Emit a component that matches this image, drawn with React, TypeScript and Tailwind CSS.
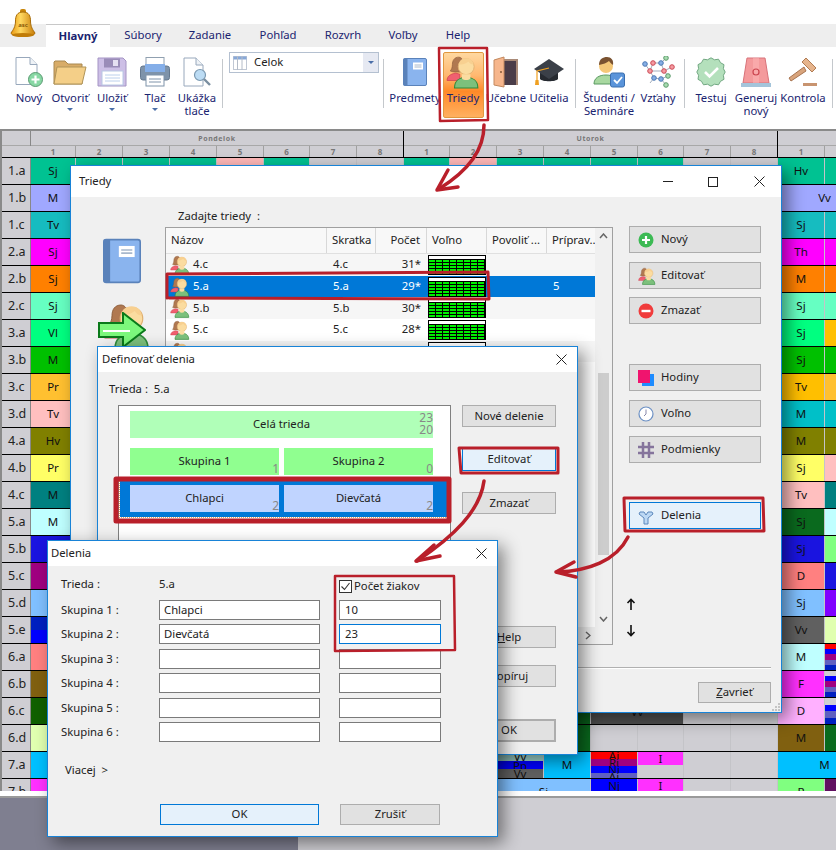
import React from 'react'

type Cell = { s?: number; c: string | string[]; t?: string; ts?: string[] }

const red = '#b91f2a'
const gray = 'bg-[#cfced3]'

const spans: Record<number, string> = {
    1: 'col-span-1', 2: 'col-span-2', 9: 'col-span-9', 10: 'col-span-10', 15: 'col-span-15',
}

const midGray: Cell[] = [{ s: 15, c: gray }]

const rows: { label: string; first: Cell; mid?: Cell[]; right: Cell[] }[] = [
    {
        label: '1.a', first: { c: 'bg-[#00c292]', t: 'Sj' },
        mid: [
            { c: 'bg-[#00c292]' }, { c: 'bg-[#00c292]' }, { c: 'bg-[#00c292]' }, { c: 'bg-[#ffb8b8]' },
            { c: 'bg-[#00c292]', t: 'Sj' }, { c: gray }, { c: gray }, { c: 'bg-[#00c292]' }, { c: 'bg-[#ffb8b8]' },
            { c: 'bg-[#00c292]' }, { c: 'bg-[#00c292]' }, { c: 'bg-[#00c292]' }, { c: 'bg-[#00c292]' }, { c: gray }, { c: gray },
        ],
        right: [{ c: 'bg-[#00c292]', t: 'Hv' }, { c: 'bg-[#00c292]' }],
    },
    { label: '1.b', first: { c: 'bg-[#a0a8ff]', t: 'M' }, right: [{ s: 2, c: 'bg-[#a0a8ff]', t: 'Vv' }] },
    { label: '1.c', first: { c: 'bg-[#16bcc0]', t: 'Tv' }, right: [{ c: 'bg-[#16bcc0]', t: 'Sj' }, { c: 'bg-[#16bcc0]' }] },
    { label: '2.a', first: { c: 'bg-[#ff00ff]', t: 'Sj' }, right: [{ c: 'bg-[#ff00ff]', t: 'Th' }, { c: 'bg-[#ff00ff]' }] },
    { label: '2.b', first: { c: 'bg-[#ff8000]', t: 'Sj' }, right: [{ c: 'bg-[#ff8000]', t: 'M' }, { c: 'bg-[#ff8000]' }] },
    { label: '2.c', first: { c: 'bg-[#66ffc2]', t: 'Sj' }, right: [{ c: 'bg-[#66ffc2]', t: 'Sj' }, { c: 'bg-[#66ffc2]' }] },
    { label: '3.a', first: { c: 'bg-[#00ff80]', t: 'Vl' }, right: [{ c: 'bg-[#00ff80]', t: 'Sj' }, { c: 'bg-[#ffbf00]' }] },
    { label: '3.b', first: { c: 'bg-[#00c000]', t: 'M' }, right: [{ c: 'bg-[#00c000]', t: 'Sj' }, { c: 'bg-[#00c000]' }] },
    { label: '3.c', first: { c: 'bg-[#ffc030]', t: 'Pr' }, right: [{ c: 'bg-[#ffbf00]', t: 'Tv' }, { c: 'bg-[#ffc030]' }] },
    { label: '3.d', first: { c: 'bg-[#ffbfbf]', t: 'Tv' }, right: [{ c: 'bg-[#00c0c8]', t: 'M' }, { c: 'bg-[#00c0c8]' }] },
    { label: '4.a', first: { c: 'bg-[#808000]', t: 'Hv' }, right: [{ c: 'bg-[#808000]', t: 'M' }, { c: 'bg-[#808000]' }] },
    { label: '4.b', first: { c: 'bg-[#ffff66]', t: 'Pr' }, right: [{ c: 'bg-[#ffff66]', t: 'Sj' }, { c: 'bg-[#ffbfbf]' }] },
    { label: '4.c', first: { c: 'bg-[#008080]', t: 'M' }, right: [{ c: 'bg-[#ffbfbf]', t: 'Tv' }, { c: 'bg-[#008080]' }] },
    { label: '5.a', first: { c: 'bg-[#bfffff]', t: 'M' }, right: [{ c: 'bg-[#0a6a1e]', t: 'Sj' }, { c: 'bg-[#bfffff]' }] },
    { label: '5.b', first: { c: 'bg-[#1a14e0]' }, right: [{ c: 'bg-[#1a14e0]', t: 'Sj' }, { c: 'bg-[#80ff80]' }] },
    { label: '5.c', first: { c: 'bg-[#a00080]' }, right: [{ c: 'bg-[#ff8080]', t: 'D' }, { c: 'bg-[#1a14e0]' }] },
    { label: '5.d', first: { c: 'bg-[#80c0ff]' }, right: [{ c: 'bg-[#80c0ff]', t: 'Sj' }, { c: 'bg-[#8000ff]' }] },
    { label: '5.e', first: { c: ['bg-[#0020c0]', 'bg-[#0000ff]'] }, right: [{ c: 'bg-[#606060]', t: 'Vv' }, { c: 'bg-[#e0ffb0]' }] },
    {
        label: '6.a', first: { c: 'bg-[#ff8080]' },
        right: [{ c: 'bg-[#bfffff]', t: 'M' }, { c: ['bg-[#ff0000]', 'bg-[#0000ff]', 'bg-[#a00080]', 'bg-[#6060c0]', 'bg-[#0020c0]'] }],
    },
    {
        label: '6.b', first: { c: 'bg-[#806010]' },
        right: [{ c: 'bg-[#ff30ff]', t: 'F' }, { c: ['bg-[#cfced3]', 'bg-[#0000ff]', 'bg-[#a00080]', 'bg-[#6060c0]', 'bg-[#0020c0]'] }],
    },
    {
        label: '6.c', first: { c: 'bg-[#106000]' },
        mid: [
            { s: 10, c: 'bg-[#500a50]' }, { c: 'bg-[#0a6a1e]', t: 'Sj' },
            { s: 2, c: ['bg-[#0000c0]', 'bg-[#505050]', 'bg-[#505050]', 'bg-[#505050]', 'bg-[#505050]', 'bg-[#505050]', 'bg-[#505050]'], t: 'Vv' }, { c: gray }, { c: gray },
        ],
        right: [{ c: 'bg-[#ffb0ff]', t: 'D' }, { c: ['bg-[#cfced3]', 'bg-[#0000ff]', 'bg-[#6060c0]', 'bg-[#0020c0]'] }],
    },
    {
        label: '6.d', first: { c: 'bg-[#e0ffb0]' },
        mid: [{ s: 10, c: 'bg-[#806010]' }, { c: 'bg-[#0a6a1e]', t: 'Sj' }, { c: gray }, { c: gray }, { c: gray }, { c: gray }],
        right: [{ c: 'bg-[#806010]', t: 'M' }, { c: 'bg-[#0a6a1e]' }],
    },
    {
        label: '7.a', first: { c: 'bg-[#00c0ff]' },
        mid: [
            { s: 9, c: gray }, { c: ['bg-[#a0d8d0]', 'bg-[#0000ff]', 'bg-[#606060]'], ts: ['Vv', 'Pp', 'Vv'] },
            { c: 'bg-[#00c0ff]', t: 'M' },
            { c: ['bg-[#ff0000]', 'bg-[#a00080]', 'bg-[#0000ff]', 'bg-[#6060c0]'], ts: ['Aj', 'Rj', 'Nj', 'Aj'] },
            { c: ['bg-[#ff30ff]', 'bg-[#cfced3]'], ts: ['I', ''] }, { c: gray }, { c: gray },
        ],
        right: [{ s: 2, c: 'bg-[#00c0ff]', t: 'M' }],
    },
    {
        label: '7.b', first: { c: 'bg-[#ff30ff]' },
        mid: [
            { s: 9, c: gray }, { s: 2, c: 'bg-[#80c0ff]', t: 'Sj' },
            { c: ['bg-[#0000ff]', 'bg-[#a00080]'], ts: ['Nj', 'Rj'] },
            { c: ['bg-[#ff30ff]', 'bg-[#cfced3]'], ts: ['I', ''] }, { c: gray }, { c: gray },
        ],
        right: [{ c: 'bg-[#80ff80]', t: 'R' }, { c: 'bg-[#601060]' }],
    },
]

const TimeCell = ({ cell }: { cell: Cell }) => {
    const span = spans[cell.s ?? 1]
    if (Array.isArray(cell.c)) {
        return (
            <div className={`${span} relative flex flex-col border-r border-[#c4c4c8] overflow-hidden`}>
                {cell.c.map((c, i) => (
                    <div key={i} className={`${c} flex-1 flex items-center justify-center text-[11.5px] leading-[7px] text-[#111]`}>
                        {cell.ts ? cell.ts[i] : ''}
                    </div>
                ))}
                {cell.t && <span className='absolute inset-0 pt-[5px] text-center text-[11.5px] text-[#111]'>{cell.t}</span>}
            </div>
        )
    }
    return (
        <div className={`${span} ${cell.c} flex items-center justify-center border-r border-[#c4c4c8] text-[11.5px] text-[#111]`}>
            {cell.t}
        </div>
    )
}

const TimeGrid = () => {
    const template = 'grid grid-cols-[29px_45px_47px_47px_47px_47px_46px_47px_47px_46px_47px_47px_47px_47px_46px_47px_47px_47px_47px]'
    return (
        <div className={`h-[662px] overflow-hidden border-t-2 border-[#8a8a8a] border-l-2 w-[900px] ${gray}`}>
            <div className={`${template} h-[15px] border-b border-[#a8a8a8]`}>
                <div className='row-span-2 border-r border-[#888]' />
                <div className='col-span-8 border-r border-black text-center text-[7px] leading-[15px] font-bold tracking-[0.6px] text-[#777]'>Pondelok</div>
                <div className='col-span-8 border-r border-black text-center text-[7px] leading-[15px] font-bold tracking-[0.6px] text-[#777]'>Utorok</div>
                <div className='col-span-2' />
            </div>
            <div className={`${template} h-[12px] border-b border-black`}>
                <div />
                {[1, 2, 3, 4, 5, 6, 7, 8, 1, 2, 3, 4, 5, 6, 7, 8, 1, 2].map((n, i) => (
                    <div key={i} className={`text-center text-[8px] leading-[11px] font-bold text-[#777] border-r ${i === 7 || i === 15 ? 'border-black' : 'border-[#a0a0a0]'}`}>{n}</div>
                ))}
            </div>
            {rows.map(r => (
                <div key={r.label} className={`${template} h-[27px] border-b border-black`}>
                    <div className='flex items-center pl-[6px] text-[12.5px] text-[#222] border-r border-[#888]'>{r.label}</div>
                    <TimeCell cell={r.first} />
                    {(r.mid ?? midGray).map((c, i) => <TimeCell key={i} cell={c} />)}
                    {r.right.map((c, i) => <TimeCell key={i} cell={c} />)}
                </div>
            ))}
        </div>
    )
}

/* ---- icons ---- */

const Bell = () => (
    <svg width='28' height='30' viewBox='0 0 28 30'>
        <defs>
            <linearGradient id='bellg' x1='0' x2='1' y1='0' y2='0'>
                <stop offset='0' stopColor='#e89810' />
                <stop offset='0.4' stopColor='#ffd860' />
                <stop offset='1' stopColor='#c87c08' />
            </linearGradient>
        </defs>
        <rect x='11' y='1' width='6' height='5' rx='2' fill='#c8860a' />
        <path d='M14 4c-6 0-7.5 4-7.5 9 0 6-2.500 9-4.500 12 0 2 5 3 12 3s12-1 12-3c-2-3-4.500-6-4.500-12 0-5-1.500-9-7.500-9z' fill='url(#bellg)' stroke='#a86c08' />
        <ellipse cx='14' cy='27' rx='11' ry='2' fill='#c07c08' />
        <text x='14' y='19' textAnchor='middle' fontSize='6' fontWeight='700' fill='#8a5a08'>asc</text>
    </svg>
)

const Person = ({ size }: { size: number }) => (
    <svg width={size} height={size} viewBox='0 0 32 32'>
        <path d='M12 2c-4 0-6 3-6 7 0 3-1 5-2 6 2 1 4 1 6 1h6V6c0-2-2-4-4-4z' fill='#b07850' stroke='#8a5a38' strokeWidth='.6' />
        <path d='M1 24c0-4 3-6 8-7l4 1v6z' fill='#f06070' stroke='#c83848' strokeWidth='.6' />
        <circle cx='19' cy='11' r='7.500' fill='#fbdca0' stroke='#e0b070' strokeWidth='.8' />
        <path d='M12 9c1-5 4-6 7-6s6 1 7 6c-3 0-4-2-5-3-2 2-6 3-9 3z' fill='#f8d090' />
        <path d='M8 31c0-7 5-10 11-10s11 3 11 10z' fill='#7cc07c' stroke='#2e8a3a' strokeWidth='1' />
        <path d='M15 18h8v4c-2 2-6 2-8 0z' fill='#fbdca0' />
    </svg>
)

const Book = ({ w, h }: { w: number; h: number }) => (
    <svg width={w} height={h} viewBox='0 0 24 28'>
        <rect x='.5' y='.5' width='23' height='27' rx='1.500' fill='#8ab4ee' stroke='#5a82ba' />
        <rect x='.5' y='.5' width='4' height='27' fill='#5a82ba' />
        <rect x='10' y='4.500' width='10' height='7' fill='#fff' />
        <path d='M11.500 7h7M11.500 9h7' stroke='#a8b8cc' />
    </svg>
)

const NewDoc = () => (
    <svg width='30' height='32' viewBox='0 0 30 32'>
        <path d='M2 1.500h14l7 7v20H2z' fill='#fff' stroke='#98a8bc' />
        <path d='M16 1.500v7h7' fill='#eef2f6' stroke='#98a8bc' />
        <circle cx='21.500' cy='23.500' r='7' fill='#88d8a4' stroke='#5a9a72' />
        <path d='M21.500 19.500v8M17.500 23.500h8' stroke='#fff' strokeWidth='2.200' />
    </svg>
)

const Folder = () => (
    <svg width='34' height='28' viewBox='0 0 34 28'>
        <path d='M1 4V26h28V6H15l-3-3H2z' fill='#d8ac68' stroke='#a88850' />
        <path d='M1 26l3-17h29l-4 17z' fill='#f4cf88' stroke='#b09458' />
    </svg>
)

const Floppy = () => (
    <svg width='30' height='30' viewBox='0 0 30 30'>
        <path d='M1 1h25l3 3v25H1z' fill='#cdbfe6' stroke='#a494c4' />
        <rect x='7' y='1.500' width='16' height='9' fill='#9a8cb8' />
        <rect x='16' y='3' width='5' height='6' fill='#e6e0f2' />
        <rect x='5' y='14' width='21' height='14' fill='#fff' stroke='#b8c8e4' />
        <path d='M8 18h15M8 21h15M8 24h15' stroke='#bcd0ec' />
    </svg>
)

const Printer = () => (
    <svg width='30' height='30' viewBox='0 0 30 30'>
        <rect x='6' y='.5' width='18' height='9' fill='#fff' stroke='#90a0b0' />
        <rect x='.5' y='9' width='29' height='14' rx='2.500' fill='#7e93aa' stroke='#64788e' />
        <rect x='5' y='7' width='20' height='8' fill='#84aee8' />
        <rect x='6' y='18' width='18' height='11' fill='#fff' stroke='#7e93aa' />
        <path d='M9 22h12M9 25h12' stroke='#7e93aa' />
    </svg>
)

const Preview = () => (
    <svg width='28' height='30' viewBox='0 0 28 30'>
        <path d='M1 1h12l7 7v21H1z' fill='#fff' stroke='#98a8bc' />
        <path d='M13 1v7h7' fill='#eef2f6' stroke='#98a8bc' />
        <circle cx='17' cy='18' r='5.500' fill='#bcdcf4' stroke='#7a98b0' strokeWidth='1.200' />
        <path d='M21 22l6 6' stroke='#7a8ea0' strokeWidth='2.400' />
    </svg>
)

const Door = () => (
    <svg width='26' height='32' viewBox='0 0 26 32'>
        <rect x='3' y='3' width='22' height='26' fill='#a98a78' />
        <rect x='10' y='5' width='13' height='24' fill='#4a3c48' />
        <path d='M1 4l10-3v30l-10-2z' fill='#f6b68c' stroke='#c48a60' />
        <circle cx='8' cy='16' r='.9' fill='#7a5030' />
    </svg>
)

const Cap = () => (
    <svg width='32' height='30' viewBox='0 0 32 30'>
        <path d='M7 13v9c2 3 16 3 18 0v-9z' fill='#262a30' />
        <path d='M16 2l15 10-15 10L1 12z' fill='#3b4048' />
        <path d='M16 11l-12 3v9' fill='none' stroke='#f0a020' strokeWidth='1.200' />
        <path d='M2.500 23h3l.5 5h-4z' fill='#f0a020' />
    </svg>
)

const Student = () => (
    <svg width='32' height='32' viewBox='0 0 32 32'>
        <circle cx='13' cy='10' r='7' fill='#f5c878' />
        <path d='M6 9c0-6 4-8 8-8s7 3 6 8c-2-1-3-3-4-4-2 2-6 3-10 4z' fill='#7a5230' />
        <path d='M1 28c0-6 5-9 12-9 4 0 7 1 9 3v6z' fill='#a8d8a0' stroke='#5a9a62' />
        <rect x='17.500' y='17' width='14' height='14' rx='2' fill='#5a94da' stroke='#3a6eae' />
        <path d='M21 24l3 3 5-6' fill='none' stroke='#fff' strokeWidth='1.800' />
    </svg>
)

const Molecule = () => {
    const blue = [[3, 8], [19, 7], [12, 22], [19, 23]]
    const redN = [[11, 7], [8, 15], [22, 15], [30, 11]]
    const green = [[24, 2], [26, 20], [24, 29]]
    return (
        <svg width='33' height='32' viewBox='0 0 33 32'>
            <path d='M3 8l5 7 3-8 8 0 5-5M19 7l3 8-8 0-6 0M8 15l4 7 7 1 7-3-4-5 8-4M19 23l5 6M12 22l-4 5' fill='none' stroke='#98a4b4' strokeWidth='.9' />
            {blue.map(([x, y], i) => <circle key={i} cx={x} cy={y} r='2.300' fill='#86aee4' stroke='#4a78b4' />)}
            {redN.map(([x, y], i) => <circle key={i} cx={x} cy={y} r='2.300' fill='#f49aa0' stroke='#cc4a56' />)}
            {green.map(([x, y], i) => <circle key={i} cx={x} cy={y} r='2.300' fill='#a8dcb0' stroke='#5c9a6c' />)}
        </svg>
    )
}

const Badge = () => (
    <svg width='30' height='30' viewBox='0 0 30 30'>
        <path d='M15 .8l3.500 2 4-.6 2 3.500 3.500 2-.6 4 1.800 3.300-1.800 3.300.6 4-3.500 2-2 3.500-4-.6-3.500 2-3.500-2-4 .6-2-3.500-3.500-2 .6-4L.8 15l1.800-3.300-.6-4 3.500-2 2-3.500 4 .6z' fill='#b4e0bc' stroke='#72a882' />
        <path d='M9 15l4.500 4.500L22 11' fill='none' stroke='#fff' strokeWidth='2.600' />
    </svg>
)

const Siren = () => (
    <svg width='32' height='32' viewBox='0 0 32 32'>
        <path d='M7 2h18l4 25H3z' fill='#f49a9c' stroke='#d8737a' />
        <path d='M13 2h6v25h-6z' fill='#fbb4b4' opacity='.6' />
        <circle cx='16' cy='16' r='3' fill='none' stroke='#cc4650' strokeWidth='1.200' />
        <rect x='1' y='27' width='30' height='4' fill='#a4c4da' />
    </svg>
)

const Gavel = () => (
    <svg width='32' height='32' viewBox='0 0 32 32'>
        <path d='M16 7l9 9M19 2l10 10-4 4-10-10z' fill='#e6b48c' stroke='#b07c54' />
        <path d='M17 11L2 22l2 3 15-10z' fill='#d8a47c' stroke='#a87450' />
        <rect x='16' y='27' width='14' height='3' fill='#c89470' />
    </svg>
)

const Caret = () => <div className='mt-[4px] w-0 h-0 border-x-[3px] border-x-transparent border-t-[3px] border-t-[#4a6ea8]' />

const Volno = () => (
    <svg width='58' height='20' viewBox='0 0 58 20' className='block'>
        <rect width='58' height='20' fill='#000' />
        <rect x='1' y='1' width='56' height='3' fill='#fff' />
        {[5, 8, 11, 14, 17].map(y =>
            [1, 8, 15, 22, 29, 36, 43, 50].map(x => <rect key={`${x}-${y}`} x={x} y={y} width='6' height='2' fill='#00f000' />)
        )}
    </svg>
)

const GridIcon = () => (
    <svg width='16' height='16' viewBox='0 0 16 16'>
        <path d='M5 0v16M11 0v16M0 5h16M0 11h16' stroke='#85749c' strokeWidth='2.500' />
    </svg>
)

const Clock = () => (
    <svg width='16' height='16' viewBox='0 0 16 16'>
        <circle cx='8' cy='8' r='7' fill='#fff' stroke='#6c90c4' strokeWidth='1.200' />
        <path d='M8 3.500V8l-2 2' fill='none' stroke='#88a' />
    </svg>
)

const Branch = () => (
    <svg width='16' height='18' viewBox='0 0 16 18'>
        <path d='M6 17h4v-6l5-4-1-2h-4L8 8 6 5H2L1 7l5 4z' fill='#bcd8f4' stroke='#5c88bc' />
    </svg>
)

const Plus = () => (
    <svg width='16' height='16' viewBox='0 0 16 16'>
        <circle cx='8' cy='8' r='7.500' fill='#3cba54' />
        <path d='M8 4v8M4 8h8' stroke='#fff' strokeWidth='2.200' />
    </svg>
)

const Minus = () => (
    <svg width='16' height='16' viewBox='0 0 16 16'>
        <circle cx='8' cy='8' r='7.500' fill='#f03c3c' />
        <path d='M3.500 8h9' stroke='#fff' strokeWidth='2.400' />
    </svg>
)

const Squares = () => (
    <div className='relative w-[16px] h-[16px]'>
        <div className='absolute right-0 bottom-0 w-[12px] h-[12px] bg-[#1e8cff]' />
        <div className='absolute left-0 top-0 w-[12px] h-[13px] bg-[#f0146e]' />
    </div>
)

const XMark = () => (
    <svg width='11' height='11' viewBox='0 0 11 11'>
        <path d='M.5.5l10 10M10.500.5l-10 10' stroke='#222' fill='none' />
    </svg>
)

/* ---- ribbon ---- */

const RibbonItem = ({ w, icon, label, caret }: { w: string; icon: React.ReactNode; label: string[]; caret?: boolean }) => (
    <div className={`${w} flex flex-col items-center pt-[8px] text-[11.3px] leading-[13px] text-[#1a2470]`}>
        <div className='h-[34px] flex items-center justify-center'>{icon}</div>
        <div className='mt-[2px] flex flex-col items-center whitespace-nowrap'>
            {label.map(l => <span key={l}>{l}</span>)}
        </div>
        {caret && <Caret />}
    </div>
)

const Sep = ({ ml }: { ml: string }) => <div className={`${ml} mt-[12px] h-[49px] w-px bg-[#c4c8cc]`} />

const Ribbon = () => (
    <div className='h-[82px] bg-white flex pl-[10px]'>
        <RibbonItem w='w-[38px]' icon={<NewDoc />} label={['Nový']} />
        <RibbonItem w='w-[44px]' icon={<Folder />} label={['Otvoriť']} caret />
        <RibbonItem w='w-[40px]' icon={<Floppy />} label={['Uložiť']} caret />
        <RibbonItem w='w-[46px]' icon={<Printer />} label={['Tlač']} caret />
        <RibbonItem w='w-[38px]' icon={<Preview />} label={['Ukážka', 'tlače']} />
        <Sep ml='ml-[6px]' />
        <div className='ml-[6px] mt-[5px] h-[21px] w-[150px] border border-[#b4c0d0] flex items-center'>
            <svg width='14' height='14' viewBox='0 0 14 14' className='ml-[3px]'>
                <rect x='.5' y='.5' width='13' height='13' fill='#fff' stroke='#c0c8d4' />
                <rect x='.5' y='.5' width='13' height='3' fill='#88a8d8' />
                <path d='M4.500 0v14M9 0v14' stroke='#b4bcc8' />
            </svg>
            <span className='ml-[7px] flex-1 text-[11.3px] text-[#222]'>Celok</span>
            <div className='h-full w-[15px] bg-[#e6e9f2] flex items-center justify-center'>
                <div className='w-0 h-0 border-x-[3px] border-x-transparent border-t-[3px] border-t-[#4a6ea8]' />
            </div>
        </div>
        <Sep ml='ml-[4px]' />
        <div className='ml-[8px]'><RibbonItem w='w-[46px]' icon={<Book w={24} h={28} />} label={['Predmety']} /></div>
        <div className='w-[50px] flex flex-col items-center text-[11.3px] leading-[13px] text-[#1a2470]'>
            <div className='mt-[5px] h-[66px] w-[41px] flex flex-col items-center rounded-[2px] border border-[#e09840] bg-[linear-gradient(180deg,#ffd8a0_0%,#ffb870_35%,#ff8a28_60%,#ffb060_100%)]'>
                <div className='mt-[2px] h-[34px] flex items-center'><Person size={34} /></div>
                <span className='mt-[2px]'>Triedy</span>
            </div>
        </div>
        <RibbonItem w='w-[36px]' icon={<Door />} label={['Učebne']} />
        <RibbonItem w='w-[50px]' icon={<Cap />} label={['Učitelia']} />
        <Sep ml='ml-[1px]' />
        <div className='ml-[2px]'><RibbonItem w='w-[62px]' icon={<Student />} label={['Študenti /', 'Semináre']} /></div>
        <RibbonItem w='w-[36px]' icon={<Molecule />} label={['Vzťahy']} />
        <Sep ml='ml-[8px]' />
        <div className='ml-[5px]'><RibbonItem w='w-[42px]' icon={<Badge />} label={['Testuj']} /></div>
        <RibbonItem w='w-[48px]' icon={<Siren />} label={['Generuj', 'nový']} />
        <RibbonItem w='w-[46px]' icon={<Gavel />} label={['Kontrola']} />
        <Sep ml='ml-[6px]' />
    </div>
)

const tabs: [string, string][] = [
    ['Súbory', 'w-[66px]'], ['Zadanie', 'w-[68px]'], ['Pohľad', 'w-[68px]'], ['Rozvrh', 'w-[62px]'], ['Voľby', 'w-[58px]'], ['Help', 'w-[52px]'],
]

const Tabs = () => (
    <div className='h-[23px] bg-[#eeeeee] flex pl-[46px] text-[11.3px] text-[#1a2470]'>
        <div className='w-[64px] bg-white border-t border-[#c8c8c8] flex items-center justify-center font-bold'>Hlavný</div>
        {tabs.map(([t, w]) => <div key={t} className={`${w} flex items-center justify-center`}>{t}</div>)}
    </div>
)

/* ---- dialogs ---- */

const Btn = ({ w, h, className = '', focus, children }: { w: string; h: string; className?: string; focus?: boolean; children: React.ReactNode }) => (
    <div className={`${w} ${h} ${className} flex items-center justify-center border text-[11.3px] text-[#222] ${focus ? 'border-[#0078d7] bg-[#e5f1fb]' : 'border-[#adadad] bg-[#e1e1e1]'}`}>
        {children}
    </div>
)

const SideBtn = ({ icon, label, className = '', focus }: { icon: React.ReactNode; label: string; className?: string; focus?: boolean }) => (
    <div className={`w-[132px] h-[27px] ${className} flex items-center border ${focus ? 'border-[#0078d7] bg-[#e5f1fb]' : 'border-[#adadad] bg-[#e1e1e1]'} text-[11.3px] text-[#222]`}>
        <div className='w-[31px] pl-[8px] flex items-center'>{icon}</div>
        <span>{label}</span>
    </div>
)

const listRows = [
    { n: '4.c', pocet: '31*', bg: 'bg-[#f6f6f6]' },
    { n: '5.a', pocet: '29*', bg: 'bg-[#0078d7] text-white', pr: '5' },
    { n: '5.b', pocet: '30*', bg: 'bg-[#f6f6f6]' },
    { n: '5.c', pocet: '28*', bg: 'bg-white' },
    { n: '5.d', pocet: '28', bg: 'bg-[#f6f6f6]' },
]

const listCols = 'grid grid-cols-[161px_49px_51px_60px_60px_49px]'

const TriedyDialog = () => (
    <div className='absolute left-[70px] top-[165px] w-[712px] h-[548px] border border-[#1883d7] bg-[#f0f0f0] flex flex-col shadow-[6px_6px_16px_rgba(0,0,0,0.45)]'>
        <div className='h-[31px] shrink-0 bg-white flex items-center pl-[8px] text-[11.3px] text-[#222]'>
            <span className='flex-1'>Triedy</span>
            <div className='w-[10px] h-px bg-[#222]' />
            <div className='ml-[35px] w-[10px] h-[10px] border border-[#222]' />
            <div className='ml-[36px] mr-[16px]'><XMark /></div>
        </div>
        <div className='flex h-[470px] shrink-0'>
            <div className='w-[94px] flex flex-col pl-[32px] pt-[41px]'>
                <Book w={38} h={46} />
                <div className='relative mt-[18px] w-[48px] h-[56px]'>
                    <Person size={48} />
                    <svg width='48' height='36' viewBox='0 0 48 36' className='absolute -left-[5px] top-[10px]'>
                        <path d='M1 11h24V1l22 17-22 17V25H1z' fill='#7cf87c' stroke='#0a7a1a' strokeWidth='2' />
                        <path d='M5 19h27' stroke='#fff' strokeWidth='2' />
                    </svg>
                </div>
            </div>
            <div className='w-[448px] flex flex-col'>
                <div className='h-[30px] pl-[13px] pt-[11px] text-[11.3px] leading-[16px] text-[#222]'>Zadajte triedy&nbsp; :</div>
                <div className='relative h-[418px] border border-[#a0a0a0] bg-white text-[11.3px] text-[#222]'>
                    <div className={`${listCols} h-[26px] bg-[#f8f8f8] border-b border-[#e0e0e0]`}>
                        {['Názov', 'Skratka', 'Počet', 'Voľno', 'Povoliť ...', 'Príprav...'].map((t, i) => (
                            <div key={t} className={`flex items-center border-r border-[#d8d8d8] whitespace-nowrap overflow-hidden ${i === 2 ? 'justify-end pr-[6px]' : 'pl-[5px]'}`}>{t}</div>
                        ))}
                    </div>
                    {listRows.map(r => (
                        <div key={r.n} className={`${listCols} h-[21.700px] w-[430px] items-center ${r.bg}`}>
                            <div className='flex items-center pl-[4px] gap-[3px]'><Person size={20} /><span>{r.n}</span></div>
                            <div className='pl-[6px]'>{r.n}</div>
                            <div className='text-right pr-[6px]'>{r.pocet}</div>
                            <div className='pl-[1px]'><Volno /></div>
                            <div />
                            <div className='pl-[6px]'>{r.pr}</div>
                        </div>
                    ))}
                    <div className='absolute right-0 top-0 bottom-[17px] w-[17px] bg-[#f0f0f0] flex flex-col items-center justify-between py-[5px]'>
                        <svg width='9' height='6' viewBox='0 0 9 6'><path d='M1 5l3.500-4L8 5' fill='none' stroke='#666' strokeWidth='1.500' /></svg>
                        <div className='absolute left-[3px] top-[145px] bottom-[72px] w-[11px] bg-[#cdcdcd]' />
                        <svg width='9' height='6' viewBox='0 0 9 6'><path d='M1 1l3.500 4L8 1' fill='none' stroke='#666' strokeWidth='1.500' /></svg>
                    </div>
                    <div className='absolute left-0 right-0 bottom-0 h-[17px] bg-[#f0f0f0] flex items-center justify-end pr-[21px]'>
                        <svg width='6' height='9' viewBox='0 0 6 9'><path d='M1 1l4 3.500L1 8' fill='none' stroke='#666' strokeWidth='1.500' /></svg>
                    </div>
                </div>
            </div>
            <div className='flex flex-col pl-[16px] pt-[29px]'>
                <SideBtn icon={<Plus />} label='Nový' />
                <SideBtn icon={<Person size={18} />} label='Editovať' className='mt-[9px]' />
                <SideBtn icon={<Minus />} label='Zmazať' className='mt-[8px]' />
                <SideBtn icon={<Squares />} label='Hodiny' className='mt-[40px]' />
                <SideBtn icon={<Clock />} label='Voľno' className='mt-[9px]' />
                <SideBtn icon={<GridIcon />} label='Podmienky' className='mt-[9px]' />
                <SideBtn icon={<Branch />} label='Delenia' className='mt-[39px]' focus />
                <svg width='10' height='12' viewBox='0 0 10 12' className='mt-[69px] ml-[-3px]'><path d='M5 12V2M1.500 5L5 1.500 8.500 5' fill='none' stroke='#111' strokeWidth='1.600' /></svg>
                <svg width='10' height='12' viewBox='0 0 10 12' className='mt-[15px] ml-[-3px]'><path d='M5 0v10M1.500 7L5 10.500 8.500 7' fill='none' stroke='#111' strokeWidth='1.600' /></svg>
            </div>
        </div>
        <div className='mr-[10px] ml-[8px] h-[2px] border-t border-[#b0b0b0] bg-white' />
        <div className='flex justify-end pr-[10px] pt-[13px]'>
            <Btn w='w-[73px]' h='h-[21px]'><span><span className='underline'>Z</span>avrieť</span></Btn>
        </div>
        <svg width='8' height='8' viewBox='0 0 8 8' className='absolute right-[1px] bottom-[1px]'>
            <path d='M6 0h2v2H6zM3 3h2v2H3zM6 3h2v2H6zM0 6h2v2H0zM3 6h2v2H3zM6 6h2v2H6z' fill='#c4c4c4' />
        </svg>
    </div>
)

const Group = ({ label, n, className }: { label: string; n: string; className: string }) => (
    <div className={`relative h-[27px] flex items-center justify-center text-[11.3px] text-[#222] ${className}`}>
        {label}
        <span className='absolute right-0 bottom-0 text-[12px] leading-[13px] text-[#888]'>{n}</span>
    </div>
)

const DeleniaList = () => (
    <div className='absolute left-[97px] top-[346px] w-[481px] h-[409px] border border-[#1883d7] bg-[#f0f0f0] flex flex-col text-[11.3px] text-[#222] shadow-[6px_6px_16px_rgba(0,0,0,0.45)]'>
        <div className='h-[25px] bg-white flex items-center pl-[4px]'>
            <span className='flex-1'>Definovať delenia</span>
            <div className='mr-[10px]'><XMark /></div>
        </div>
        <div className='pl-[11px] pt-[9px] h-[33px]'>Trieda :&nbsp; 5.a</div>
        <div className='flex'>
            <div className='ml-[20px] w-[333px] h-[200px] border border-[#808080] bg-white pt-[5px]'>
                <div className='relative ml-[11px] h-[27px] w-[303px] bg-[#b0ffb8] flex items-center justify-center'>
                    Celá trieda
                    <div className='absolute right-0 top-[1px] text-[12px] leading-[12px] text-[#888] text-right'>23<br />20</div>
                </div>
                <div className='ml-[11px] mt-[10px] w-[303px] flex gap-[5px]'>
                    <Group label='Skupina 1' n='1' className='w-[149px] bg-[#90ff90]' />
                    <Group label='Skupina 2' n='0' className='w-[149px] bg-[#90ff90]' />
                </div>
                <div className='ml-px mt-[5px] w-[327px] h-[37px] bg-[#0078d7] pl-[10px] pt-[5px] flex gap-[5px] outline-1 outline-dotted outline-[#e8a060]'>
                    <Group label='Chlapci' n='2' className='w-[149px] bg-[#c0d4ff]' />
                    <Group label='Dievčatá' n='2' className='w-[149px] bg-[#c0d4ff]' />
                </div>
            </div>
            <div className='ml-[11px] flex flex-col'>
                <Btn w='w-[94px]' h='h-[22px]'>Nové delenie</Btn>
                <Btn w='w-[94px]' h='h-[23px]' className='mt-[21px]' focus>Editovať</Btn>
                <Btn w='w-[94px]' h='h-[22px]' className='mt-[21px]'>Zmazať</Btn>
                <Btn w='w-[94px]' h='h-[22px]' className='mt-[112px]'><span><span className='underline'>H</span>elp</span></Btn>
                <Btn w='w-[94px]' h='h-[22px]' className='mt-[17px]'>Kopíruj</Btn>
                <Btn w='w-[94px]' h='h-[23px]' className='mt-[32px] border-2 border-[#0078d7]'>OK</Btn>
            </div>
        </div>
    </div>
)

const inputs = [
    ['Skupina 1 :', 'Chlapci', '10'],
    ['Skupina 2 :', 'Dievčatá', '23'],
    ['Skupina 3 :', '', ''],
    ['Skupina 4 :', '', ''],
    ['Skupina 5 :', '', ''],
    ['Skupina 6 :', '', ''],
]

const Delenia = () => (
    <div className='absolute left-[47px] top-[540px] w-[451px] h-[297px] border border-[#1883d7] bg-[#f0f0f0] flex flex-col text-[11.3px] text-[#222] shadow-[6px_6px_16px_rgba(0,0,0,0.45)]'>
        <div className='h-[25px] bg-white flex items-center pl-[3px]'>
            <span className='flex-1'>Delenia</span>
            <div className='mr-[10px]'><XMark /></div>
        </div>
        <div className='pl-[13px] pt-[9px]'>
            <div className='grid grid-cols-[98px_161px_103px] h-[25px]'>
                <span className='leading-[18px]'>Trieda :</span>
                <span className='leading-[18px]'>5.a</span>
                <div className='ml-[19px] w-[103px] h-[18px] mt-[2px] flex items-center gap-[2px] whitespace-nowrap'>
                    <svg width='13' height='13' viewBox='0 0 13 13' className='shrink-0'>
                        <rect x='.5' y='.5' width='12' height='12' fill='#fff' stroke='#333' />
                        <path d='M2.500 6.500l3 3 5-6.500' fill='none' stroke='#333' strokeWidth='1.100' />
                    </svg>
                    <span>Počet žiakov</span>
                </div>
            </div>
            {inputs.map(([label, a, b], i) => (
                <div key={label} className='grid grid-cols-[98px_161px_auto] h-[24.400px]'>
                    <span className='leading-[20px]'>{label}</span>
                    <div className='h-[20px] border border-[#7a7a7a] bg-white pl-[4px] leading-[18px]'>{a}</div>
                    <div className={`ml-[19px] w-[102px] h-[20px] border bg-white pl-[5px] leading-[18px] ${i === 1 ? 'border-[#0078d7]' : 'border-[#7a7a7a]'}`}>{b}</div>
                </div>
            ))}
        </div>
        <div className='pl-[17px] mt-[16px] leading-[16px]'>Viacej &nbsp;&gt;</div>
        <div className='pl-[112px] mt-[26px] flex'>
            <Btn w='w-[159px]' h='h-[21px]' focus>OK</Btn>
            <Btn w='w-[100px]' h='h-[21px]' className='ml-[21px]'>Zrušiť</Btn>
        </div>
    </div>
)

const Annotations = () => (
    <svg width='836' height='850' viewBox='0 0 836 850' className='absolute left-0 top-0 pointer-events-none' fill='none' stroke={red} strokeLinecap='round' strokeLinejoin='round'>
        <path d='M439 48h48l1 72-48 1z' strokeWidth='2.500' />
        <path d='M484 125c0 25-15 45-45 64' strokeWidth='3.500' />
        <path d='M437 190l11-20M437 190l21-3' strokeWidth='3.500' />
        <path d='M167 298v-24l321-2 1 27-320-1' strokeWidth='3' />
        <path d='M459 448h99v25h-97z' strokeWidth='3' />
        <path d='M116 479h333v42H116z' strokeWidth='5' />
        <path d='M484 481c-4 30-30 55-67 80' strokeWidth='3.500' />
        <path d='M416 561l18-16M416 561l24-5' strokeWidth='3.500' />
        <path d='M335 576h119l1 74-120 1z' strokeWidth='2.500' />
        <path d='M624 498h139l1 33H625z' strokeWidth='3' />
        <path d='M628 537c-12 24-40 34-71 35' strokeWidth='3.500' />
        <path d='M556 572l18-10M556 572l20 5' strokeWidth='3.500' />
    </svg>
)

const App: React.FC = () => {
    return (
        <div className="relative w-[836px] h-[850px] overflow-hidden bg-white font-['Noto_Sans',sans-serif] flex flex-col">
            <div className='h-[24px] shrink-0 bg-white' />
            <Tabs />
            <Ribbon />
            <TimeGrid />
            <div className='h-[5px] shrink-0 bg-white' />
            <div className='h-[2px] shrink-0 bg-[#9a9a9a]' />
            <div className='flex-1 flex'>
                <div className='w-[298px] bg-[#7f7f90]' />
                <div className={`flex-1 ${gray}`} />
            </div>
            <div className='absolute left-[9px] top-[8px]'><Bell /></div>
            <TriedyDialog />
            <DeleniaList />
            <Delenia />
            <Annotations />
        </div>
    )
}

export default App
